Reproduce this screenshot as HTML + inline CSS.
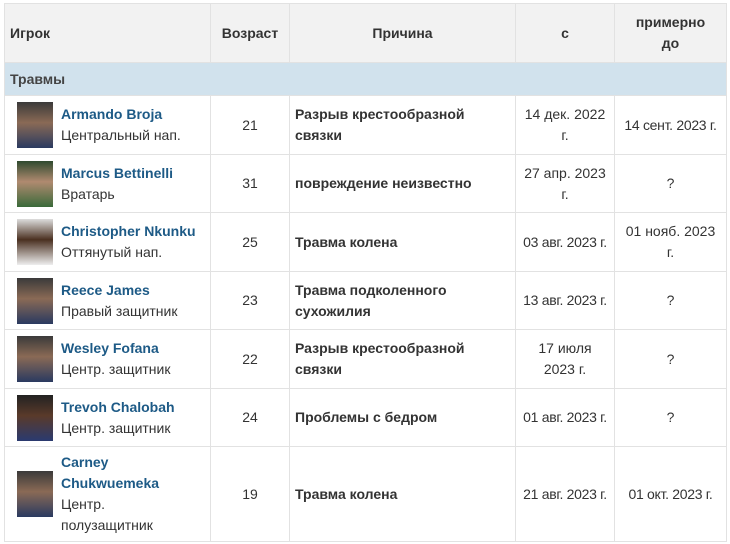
<!DOCTYPE html><html><head><meta charset="utf-8"><style>
body{margin:0;width:730px;height:544px;background:#fff;font-family:"Liberation Sans",sans-serif;font-size:14px;color:#333;overflow:hidden}
table{position:absolute;left:4px;top:3px;border-collapse:collapse;table-layout:fixed;border:1px solid #ccc}
td,th{border:1px solid #e2e2e2;padding:0 5px;line-height:21px}
th{background:#f2f2f2;height:58px;font-weight:bold;color:#333;text-align:center}
th.l{text-align:left}
tr.g td{background:#d1e2ed;height:32px;font-weight:bold;color:#444}
td{text-align:center;vertical-align:middle}
td.p{text-align:left;padding-left:12px}
.f{display:flex;align-items:center}
td.r{text-align:left;font-weight:bold;color:#333}
.ph{flex:none;width:36px;height:46px;background:linear-gradient(#3a3a3a,#8a6a55 45%,#2a3a60);margin-right:8px}
.n{color:#1d5a86;font-weight:bold}
.nw{white-space:nowrap;letter-spacing:-0.3px}
</style></head><body>
<table>
<colgroup><col style="width:206px"><col style="width:79px"><col style="width:226px"><col style="width:99px"><col style="width:112px"></colgroup>
<tr><th class="l">Игрок</th><th>Возраст</th><th>Причина</th><th>с</th><th>примерно<br>до</th></tr>
<tr class="g"><td colspan="5" style="text-align:left">Травмы</td></tr>
<tr style="height:59px"><td class="p"><div class="f"><div class="ph"></div><div><span class="n">Armando Broja</span><br>Центральный нап.</div></div></td><td>21</td><td class="r">Разрыв крестообразной связки</td><td>14 дек. 2022<br>г.</td><td class="nw">14 сент. 2023 г.</td></tr>
<tr style="height:58px"><td class="p"><div class="f"><div class="ph" style="background:linear-gradient(#2f4a2f,#b08a70 45%,#3a6a3a)"></div><div><span class="n">Marcus Bettinelli</span><br>Вратарь</div></div></td><td>31</td><td class="r">повреждение неизвестно</td><td>27 апр. 2023<br>г.</td><td>?</td></tr>
<tr style="height:59px"><td class="p"><div class="f"><div class="ph" style="background:linear-gradient(#ddd,#4a3020 45%,#eee)"></div><div><span class="n">Christopher Nkunku</span><br>Оттянутый нап.</div></div></td><td>25</td><td class="r">Травма колена</td><td class="nw">03 авг. 2023 г.</td><td>01 нояб. 2023<br>г.</td></tr>
<tr style="height:58px"><td class="p"><div class="f"><div class="ph"></div><div><span class="n">Reece James</span><br>Правый защитник</div></div></td><td>23</td><td class="r">Травма подколенного сухожилия</td><td class="nw">13 авг. 2023 г.</td><td>?</td></tr>
<tr style="height:59px"><td class="p"><div class="f"><div class="ph"></div><div><span class="n">Wesley Fofana</span><br>Центр. защитник</div></div></td><td>22</td><td class="r">Разрыв крестообразной связки</td><td>17 июля<br>2023 г.</td><td>?</td></tr>
<tr style="height:58px"><td class="p"><div class="f"><div class="ph" style="background:linear-gradient(#222,#5a3a2a 45%,#2a3a70)"></div><div><span class="n">Trevoh Chalobah</span><br>Центр. защитник</div></div></td><td>24</td><td class="r">Проблемы с бедром</td><td class="nw">01 авг. 2023 г.</td><td>?</td></tr>
<tr style="height:95px"><td class="p"><div class="f"><div class="ph"></div><div><span class="n">Carney<br>Chukwuemeka</span><br>Центр.<br>полузащитник</div></div></td><td>19</td><td class="r">Травма колена</td><td class="nw">21 авг. 2023 г.</td><td class="nw">01 окт. 2023 г.</td></tr>
</table>
</body></html>
